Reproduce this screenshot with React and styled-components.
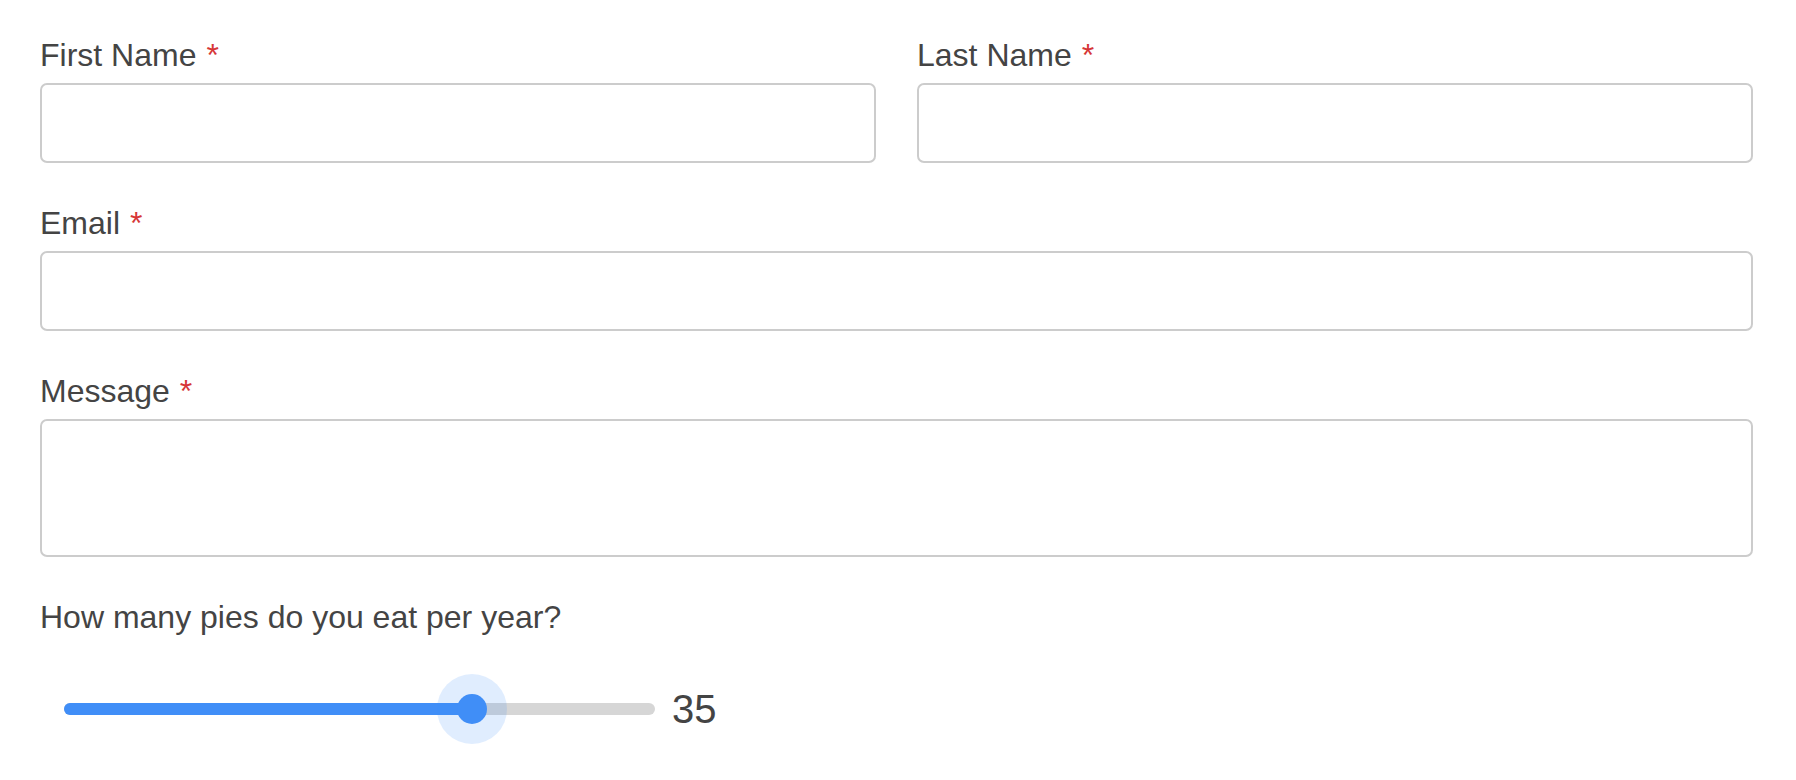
import React from "react";
import styled, { createGlobalStyle } from "styled-components";

const Global = createGlobalStyle`
  html, body { margin: 0; padding: 0; background: #fff; }
  body { font-family: "Liberation Sans", Arial, sans-serif; color: #444; }
  * { box-sizing: border-box; }
`;

const Form = styled.form`
  padding: 35px 43px 0 40px;
  display: flex;
  flex-direction: column;
  gap: 40px;
`;

const Row = styled.div`
  display: grid;
  grid-template-columns: 1fr 1fr;
  column-gap: 41px;
`;

const Field = styled.div`
  display: flex;
  flex-direction: column;
`;

const Label = styled.label`
  display: block;
  font-size: 32px;
  line-height: 40px;
  height: 40px;
  margin-bottom: 8px;
  color: #444;
  white-space: nowrap;
`;

const Required = styled.span`
  color: #d63637;
  margin-left: 10px;
`;

const Input = styled.input`
  display: block;
  width: 100%;
  height: 80px;
  border: 2px solid #cccccc;
  border-radius: 7px;
  background: #fff;
  font: inherit;
  padding: 0 20px;
  outline: none;
`;

const TextArea = styled.textarea`
  display: block;
  width: 100%;
  height: 138px;
  border: 2px solid #cccccc;
  border-radius: 7px;
  background: #fff;
  font: inherit;
  padding: 20px;
  resize: none;
  outline: none;
`;

const SliderRow = styled.div`
  display: flex;
  align-items: center;
  height: 70px;
  margin-top: 29px;
  padding-left: 24px;
  gap: 17px;
`;

const Track = styled.div`
  position: relative;
  width: 591px;
  height: 12px;
  border-radius: 6px;
  background: #d6d6d6;
`;

const Fill = styled.div`
  position: absolute;
  left: 0;
  top: 0;
  height: 12px;
  border-radius: 6px;
  background: #408ef7;
`;

const Halo = styled.div`
  position: absolute;
  top: 50%;
  width: 70px;
  height: 70px;
  margin-left: -35px;
  margin-top: -35px;
  border-radius: 50%;
  background: rgba(64, 142, 247, 0.16);
`;

const Thumb = styled.div`
  position: absolute;
  top: 50%;
  width: 30px;
  height: 30px;
  margin-left: -15px;
  margin-top: -15px;
  border-radius: 50%;
  background: #408ef7;
`;

const Value = styled.span`
  font-size: 40px;
  line-height: 1;
  color: #444;
`;

function Slider({ value, min, max }) {
  const width = 591;
  const r = 15;
  const pos = r + ((value - min) / (max - min)) * (width - 2 * r);
  return (
    <SliderRow>
      <Track>
        <Fill style={{ width: pos }} />
        <Halo style={{ left: pos }} />
        <Thumb style={{ left: pos }} />
      </Track>
      <Value>{value}</Value>
    </SliderRow>
  );
}

export default function App() {
  return (
    <>
      <Global />
      <Form onSubmit={(e) => e.preventDefault()}>
        <Row>
          <Field>
            <Label>
              First Name<Required>*</Required>
            </Label>
            <Input type="text" />
          </Field>
          <Field>
            <Label>
              Last Name<Required>*</Required>
            </Label>
            <Input type="text" />
          </Field>
        </Row>
        <Field>
          <Label>
            Email<Required>*</Required>
          </Label>
          <Input type="email" />
        </Field>
        <Field>
          <Label>
            Message<Required>*</Required>
          </Label>
          <TextArea />
        </Field>
        <Field>
          <Label>How many pies do you eat per year?</Label>
          <Slider value={35} min={0} max={50} />
        </Field>
      </Form>
    </>
  );
}
